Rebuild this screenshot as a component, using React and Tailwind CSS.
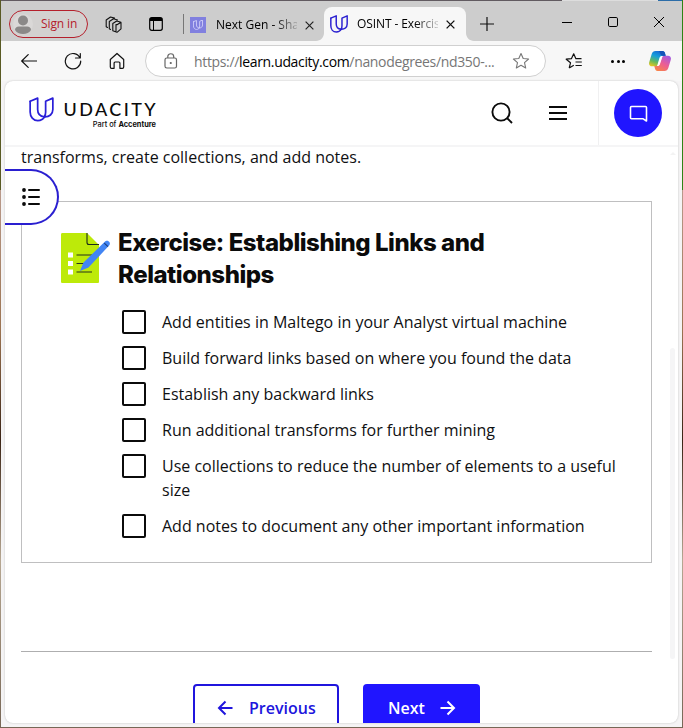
import React from "react";

const tasks = [
  "Add entities in Maltego in your Analyst virtual machine",
  "Build forward links based on where you found the data",
  "Establish any backward links",
  "Run additional transforms for further mining",
  "Use collections to reduce the number of elements to a useful size",
  "Add notes to document any other important information",
];

function UMark({ className, width = 1.7 }) {
  return (
    <svg viewBox="0 0 26 26" className={className} fill="none" stroke="currentColor" strokeWidth={width} strokeLinejoin="round" strokeLinecap="round">
      <path d="M1.200 4.500 9 1.200V13c0 4.500 2.500 7.200 7 7.600" />
      <path d="M1.200 4.500V15.500c0 5.200 3.300 9.100 7.900 9.100 3.400 0 6-1.800 7.400-4.400" />
      <path d="M24.800 1.200V13c0 4.800-3.600 7.900-8.800 7.600 1-1.500 1.300-2.900 1.300-5V4.500z" />
    </svg>
  );
}

function TabBar() {
  return (
    <div className="flex h-10 shrink-0 bg-[#cdcdcd]">
      <div className="ml-2 mt-[9px] flex h-7 w-[79px] items-center rounded-full border border-[#b5202c] bg-[#d3d1d0] pl-[3px] text-[#b5202c]">
        <svg viewBox="0 0 20 20" className="size-5 shrink-0">
          <circle cx="10" cy="10" r="10" fill="#dad8d7" />
          <circle cx="10" cy="6.500" r="5" fill="#8b8988" />
          <path d="M2 16c0-2 1.500-3.500 4-3.500h8c2.500 0 4 1.500 4 3.500-1.500 2.700-4.500 4-8 4s-6.500-1.300-8-4z" fill="#8b8988" />
        </svg>
        <span className="ml-2 whitespace-nowrap text-[12px] tracking-[-0.1px]">Sign in</span>
      </div>
      <svg viewBox="0 0 18 18" className="ml-[17px] mt-[14px] size-[18px] shrink-0" fill="none" stroke="#111" strokeWidth="1.100" strokeLinejoin="round" strokeLinecap="round">
        <path d="M7.800 8.500 11.700 6l4.300 1.300v6.500l-4 3.500-4.200-1.500zM11 9.500l1 .3L16 7.300M11 9.500v7.300" />
        <path d="M5.500 14.500 4.300 13.800V6.500L8.500 3.700l4 1.300M2.500 12.500l-1.300-.7V5l4.300-3 4 1.100" />
      </svg>
      <svg viewBox="0 0 14 14" className="ml-[26px] mt-4 size-[14px] shrink-0">
        <rect x=".7" y=".7" width="12.600" height="12.600" rx="2" fill="none" stroke="#000" strokeWidth="1.200" />
        <path d="M1 1h12v3H1z" />
        <path d="M4.500 4v9" stroke="#000" />
      </svg>
      <div className="ml-5 mt-[13px] h-5 w-px shrink-0 bg-[#777]" />
      <div className="ml-1.5 flex w-[134px] shrink-0 items-center pt-2">
        <span className="flex size-4 shrink-0 items-center justify-center bg-[#8180df] text-[#d4d3fa]">
          <UMark className="size-2.5" width={2.2} />
        </span>
        <span className="ml-2.5 w-[81px] whitespace-nowrap text-[12px] text-black [mask-image:linear-gradient(to_right,black_58px,transparent_86px)]">Next Gen - Sha</span>
        <svg viewBox="0 0 10 10" className="ml-2 size-[9px] shrink-0" stroke="#222" strokeWidth="1.300"><path d="m.7.7 8.600 8.600M9.300.7.7 9.300" /></svg>
      </div>
      <div className="relative mt-1.5 flex w-[142px] shrink-0 items-center rounded-t-lg bg-[#f7f7f7] pb-1 pl-[6px] pt-1 text-[#2a1fd0]">
        <svg viewBox="0 0 8 8" className="absolute bottom-0 right-full size-2"><path d="M8 0v8H0c4.400 0 8-3.600 8-8z" fill="#f7f7f7" /></svg>
        <svg viewBox="0 0 8 8" className="absolute bottom-0 left-full size-2"><path d="M0 0v8h8C3.600 8 0 4.400 0 0z" fill="#f7f7f7" /></svg>
        <UMark className="size-[18px] shrink-0" width={2.1} />
        <span className="ml-[9px] w-[81px] shrink-0 whitespace-nowrap text-[12px] tracking-[-0.1px] text-black [mask-image:linear-gradient(to_right,black_58px,transparent_86px)]">OSINT - Exercis</span>
        <svg viewBox="0 0 10 10" className="ml-[8px] size-[9px] shrink-0" stroke="#111" strokeWidth="1.500"><path d="m.7.7 8.600 8.600M9.300.7.7 9.300" /></svg>
      </div>
      <svg viewBox="0 0 14 14" className="ml-[14px] mt-4 size-[14px] shrink-0" stroke="#111" strokeWidth="1.200"><path d="M7 0v14M0 7h14" /></svg>
      <svg viewBox="0 0 10 10" className="ml-[68px] mt-[15px] size-[10px] shrink-0" stroke="#000"><path d="M0 6.500h10" /></svg>
      <svg viewBox="0 0 10 10" className="ml-9 mt-4 size-[10px] shrink-0" fill="none" stroke="#000"><rect x=".5" y=".5" width="9" height="9" rx="1.300" /></svg>
      <svg viewBox="0 0 10 10" className="ml-9 mt-4 size-[10px] shrink-0" stroke="#000"><path d="m0 0 10 10M10 0 0 10" /></svg>
    </div>
  );
}

function CopilotLogo() {
  return (
    <svg viewBox="0 0 22 20" className="ml-[24px] h-5 w-[22px] shrink-0">
      <defs>
        <linearGradient id="cool" x1=".6" y1="0" x2=".2" y2="1">
          <stop offset="0" stopColor="#1769d4" /><stop offset=".35" stopColor="#159fdb" /><stop offset=".7" stopColor="#67b95c" /><stop offset="1" stopColor="#e8c51e" />
        </linearGradient>
        <linearGradient id="warm" x1=".8" y1="0" x2=".2" y2="1">
          <stop offset="0" stopColor="#a45be0" /><stop offset=".5" stopColor="#ec5e94" /><stop offset="1" stopColor="#f98447" />
        </linearGradient>
      </defs>
      <path d="M6.500 0h7c1.500 0 2.100 1 2.500 2.200L16.700 5h-2.500c-1.700 0-2.500.8-3 2.400L9.300 13c-.5 1.500-1.300 2.300-3 2.300H3C.8 15.300-.4 13.500.2 11.300L2.700 3C3.300 1 4.600 0 6.500 0z" fill="url(#cool)" />
      <path d="M15.500 20h-7c-1.500 0-2.100-1-2.500-2.200L5.300 15h2.500c1.700 0 2.500-.8 3-2.400L12.700 7c.5-1.500 1.300-2.300 3-2.300H19c2.200 0 3.400 1.800 2.800 4L19.300 17c-.6 2-1.900 3-3.800 3z" fill="url(#warm)" />
      <path d="M10.500 6.800c.5-1.200 1.500-2 3.200-2l-2.900 8.600c-.5 1-1.200 1.700-2.700 1.700z" fill="#fff" />
      <path d="M10 0h3.500c1.500 0 2.100 1 2.500 2.200l.7 2.500h-3.400C11.500 4.500 11 1.500 10 0z" fill="#1454b8" />
    </svg>
  );
}

function Toolbar() {
  return (
    <div className="flex h-10 shrink-0 items-center bg-[#f7f7f7]">
      <svg viewBox="0 0 16 14" className="ml-5 h-[14px] w-4 shrink-0" fill="none" stroke="#111" strokeWidth="1.200" strokeLinejoin="round" strokeLinecap="round"><path d="M15.500 7H.7M7.200.6.700 7l6.500 6.400" /></svg>
      <svg viewBox="0 0 18 18" className="ml-[27px] size-[18px] shrink-0" fill="none" stroke="#111" strokeWidth="1.200" strokeLinecap="round" strokeLinejoin="round"><path d="M16 6A7.700 7.700 0 1 0 16.700 9M16.300 1.500V6h-4.800" /></svg>
      <svg viewBox="0 0 16 18" className="ml-[27px] h-[18px] w-4 shrink-0" fill="none" stroke="#111" strokeWidth="1.200" strokeLinejoin="round"><path d="M1.300 7.500 8 1.500l6.700 6V15c0 .8-.5 1.300-1.300 1.300h-2.500V11c0-.6-.4-1-1-1H6.100c-.6 0-1 .4-1 1v5.300H2.600c-.8 0-1.300-.5-1.300-1.300z" /></svg>
      <div className="ml-5 flex h-8 w-[401px] shrink-0 items-center rounded-full border border-[#d0d0d0] bg-white">
        <svg viewBox="0 0 14 16" className="ml-[18px] h-4 w-[14px] shrink-0" fill="none" stroke="#666" strokeWidth="1.200"><rect x="1" y="5" width="11.500" height="10" rx="1.800" /><path d="M3.800 5V3.500c0-3.700 5.900-3.700 5.900 0V5" /><circle cx="6.750" cy="10" r=".5" fill="#555" /></svg>
        <span className="ml-4 w-[300px] whitespace-nowrap text-[14px] tracking-[-0.34px] text-[#767676]">https://<span className="text-black">learn.udacity.com</span>/nanodegrees/nd350-...</span>
        <svg viewBox="0 0 18 18" className="ml-[18px] size-[18px] shrink-0" fill="none" stroke="#777" strokeWidth="1.100" strokeLinejoin="round"><path d="m9 1.500 2.200 5 5.400.5-4.100 3.600 1.200 5.400L9 13.200 4.300 16l1.200-5.400L1.400 7l5.400-.5z" /></svg>
      </div>
      <svg viewBox="0 0 18 16" className="ml-[19px] h-4 w-[18px] shrink-0" fill="none" stroke="#111" strokeWidth="1.200" strokeLinejoin="round"><path d="M4.200 15 5.500 9.800 1.200 6.200l5.200-.5 2.300-4.900 2.200 4.900h5.600M8.800 12.300 4.200 15M10.500 9h6.300M10.500 12.500h6.300" /></svg>
      <div className="ml-[28px] flex gap-[2.500px]">
        <i className="size-[3px] rounded-full bg-black" /><i className="size-[3px] rounded-full bg-black" /><i className="size-[3px] rounded-full bg-black" />
      </div>
      <CopilotLogo />
    </div>
  );
}

function SiteHeader() {
  return (
    <header className="flex h-[66px] shrink-0 border-b-2 border-[#f5f5f6]">
      <div className="ml-6 mt-[15px] flex text-[#2a1fd8]">
        <UMark className="mt-px size-[25px]" width={1.8} />
        <div className="ml-[10px] flex w-[92px] flex-col items-end text-[#0b0b0b]">
          <span className="mt-[3px] -mr-[2px] h-5 whitespace-nowrap font-[Lato] text-[18px] font-medium leading-5 tracking-[2.4px]">UDACITY</span>
          <span className="mt-px whitespace-nowrap font-[Inter] text-[7.4px] font-medium leading-[9px]">Part of <b>Accenture</b></span>
        </div>
      </div>
      <svg viewBox="0 0 22 22" className="ml-auto mr-[36px] mt-[21px] size-[22px]" fill="none" stroke="#0b0b0b" strokeWidth="1.900"><circle cx="10" cy="10" r="8.600" /><path d="m16 16 5 5" /></svg>
      <svg viewBox="0 0 18 14" className="mr-[31px] mt-[25px] h-[14px] w-[18px]" stroke="#0b0b0b" strokeWidth="2"><path d="M0 1h18M0 7h18M0 13h18" /></svg>
      <div className="w-[80px] border-l border-[#f0f0f1] pl-[15px] pt-2">
        <div className="flex size-12 items-center justify-center rounded-full bg-[#2015ff]">
          <svg viewBox="0 0 20 18" className="ml-px mt-px h-[18px] w-5" fill="none" stroke="#fff" strokeWidth="1.600" strokeLinejoin="round"><path d="M2.500 1.500h14c.7 0 1 .4 1 1V16l-3.300-2.200H2.500c-.7 0-1-.4-1-1V2.500c0-.6.4-1 1-1z" /></svg>
        </div>
      </div>
    </header>
  );
}

function ExerciseIcon() {
  return (
    <svg viewBox="0 0 50 50" className="size-[50px] shrink-0">
      <path d="M1.500 0H26l12 12v36.500c0 1-.5 1.500-1.500 1.500h-35C.5 50 0 49.500 0 48.500v-47C0 .5.500 0 1.500 0z" fill="#bdea09" />
      <path d="M26 0v9.500c0 1.300.7 2 2 2h10" fill="none" stroke="#1b2b1a" strokeWidth="1.100" />
      <path d="M7 19.500h5v5H7zM7 28h5v5H7zM7 36.500h5v5H7z" fill="#fff" />
      <path d="M15.500 22H31M15.500 30.500H25M15.500 39H31" stroke="#26321c" strokeWidth="1.200" />
      <path d="m19 38 3.500-8.500L43.500 9c1-1.100 2.700-1.700 4-.8 1.600 1 1.900 3 .6 4.400L27.500 34.500z" fill="#4285f4" />
      <path d="m43.300 10.200 3.700 3.500" stroke="#173b79" strokeWidth="1.100" />
    </svg>
  );
}

export default function App() {
  return (
    <div className="relative h-[728px] w-[683px] overflow-hidden bg-[linear-gradient(to_right,#595a24_0_2px,#2f8415_2px)] font-['Open_Sans','Noto_Sans',sans-serif]">
      <div className="flex h-full flex-col bg-[linear-gradient(to_bottom,transparent_190px,#b99a8b_190px,#9b7452_330px,#3b2516_440px,#b6a792_560px,#776756)] pl-px pr-px">
        <div className="flex h-px shrink-0 bg-[#625b61]"><div className="ml-auto h-px w-[120px] bg-[linear-gradient(to_right,#ddd_96px,#2c6da8_96px)]" /></div>
        <TabBar />
        <div className="flex h-[686px] shrink-0 flex-col bg-[#f5f4f5]">
          <Toolbar />
          <div className="relative ml-[4px] flex h-[642px] w-[673px] shrink-0 flex-col overflow-hidden rounded-lg bg-white shadow-[0_0_2px_#bbb]">
            <SiteHeader />
            <div className="flex grow">
              <main className="ml-4 w-[631px] shrink-0 text-[16px] leading-6 text-[#0f1012]">
                <p className="-mt-[2px]">transforms, create collections, and add notes.</p>
                <section className="mt-[32px] flex h-[362px] border border-[#bfbfc0] pl-[39px] pt-[25px]">
                  <div className="pt-[6px]"><ExerciseIcon /></div>
                  <div className="ml-[7px]">
                    <h2 className="w-[400px] whitespace-nowrap font-[Inter] text-[24px] font-extrabold leading-8 tracking-[-0.46px] text-[#0b0b0b]">Exercise: Establishing Links and<br />Relationships</h2>
                    <ul className="ml-1 mt-[19px] flex flex-col gap-3">
                      {tasks.map((t) => (
                        <li key={t} className="flex">
                          <span className="size-6 shrink-0 rounded-xs border-2 border-[#0b0b0b]" />
                          <span className="ml-4 w-[465px]">{t}</span>
                        </li>
                      ))}
                    </ul>
                  </div>
                </section>
                <hr className="mt-[88px] border-[#aeaeaf]" />
                <div className="mt-8 flex justify-start gap-6 pl-[172px] font-semibold">
                  <button className="flex h-12 w-[146px] items-center rounded-[4px] border-2 border-[#2015dd] pl-[22px] text-[#2015dd]">
                    <svg viewBox="0 0 16 16" className="size-4" fill="none" stroke="currentColor" strokeWidth="2"><path d="M15.500 8H2M8.500 1.500 2 8l6.500 6.500" /></svg>
                    <span className="ml-4">Previous</span>
                  </button>
                  <button className="flex h-12 w-[117px] items-center rounded-[4px] bg-[#2015ff] pl-[25px] text-white">
                    <span>Next</span>
                    <svg viewBox="0 0 16 16" className="ml-[15px] size-4" fill="none" stroke="currentColor" strokeWidth="2"><path d="M.5 8H14M7.500 1.500 14 8l-6.500 6.500" /></svg>
                  </button>
                </div>
              </main>
              <div className="ml-[17px] flex w-[7px] flex-col items-center pt-[5px]">
                <i className="border-x-[3px] border-b-[3px] border-x-transparent border-b-[#f3f3f3]" />
                <i className="mt-[193px] h-[311px] w-[5px] rounded-full bg-[#f5f5f6]" />
              </div>
            </div>
            <div className="absolute left-0 top-[88px] flex h-14 w-[54px] items-center rounded-r-full border-2 border-l-0 border-[#2a1fd0] bg-white pl-[17px]">
              <svg viewBox="0 0 18 18" className="size-[18px]" stroke="#0b0b0b" strokeWidth="2" strokeLinecap="round"><path d="M7 2h10M7 9h10M7 16h10" /><path d="M2 2h.01M2 9h.01M2 16h.01" strokeWidth="3.800" /></svg>
            </div>
          </div>
        </div>
      </div>
    </div>
  );
}
